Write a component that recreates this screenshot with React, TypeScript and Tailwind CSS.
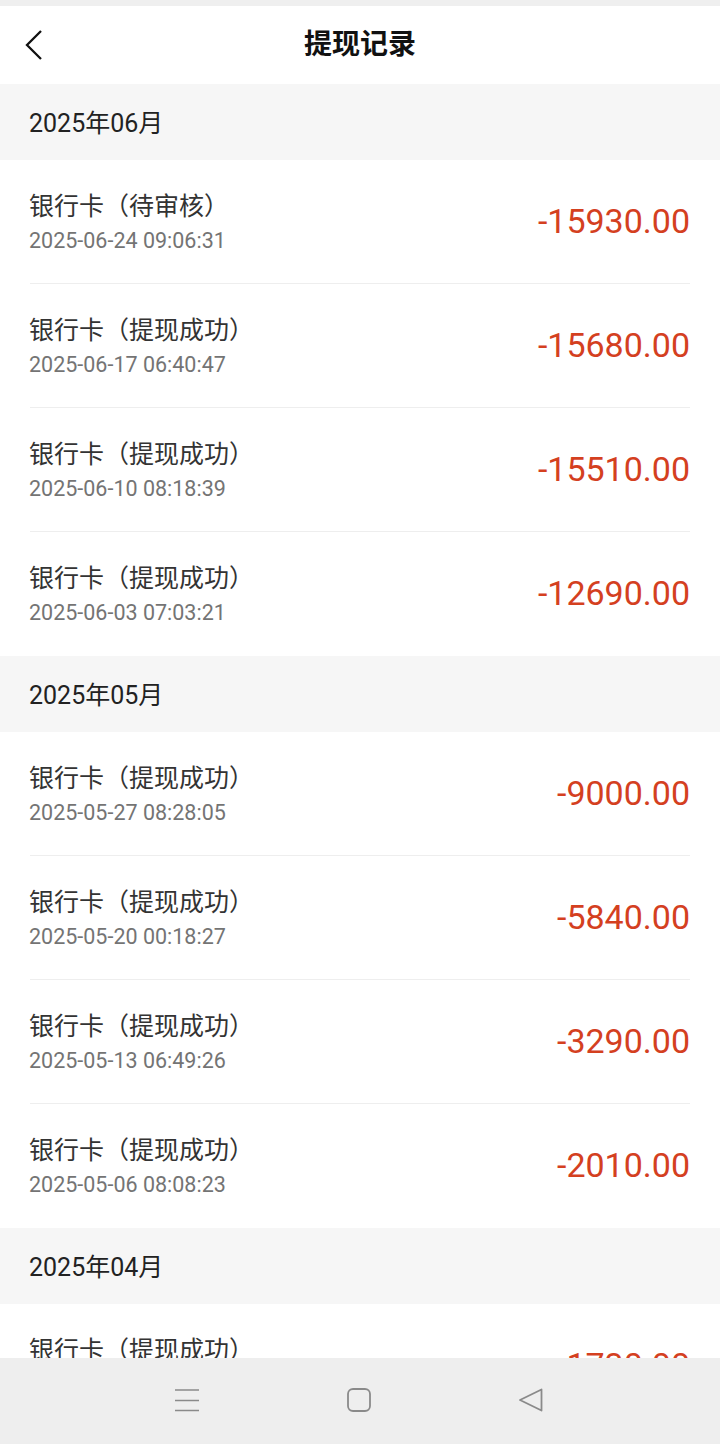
import React from 'react';

type Item = { status: string; time: string; amount: string };

const GROUPS: { month: string; items: Item[] }[] = [
  {
    month: '2025年06月',
    items: [
      { status: '待审核', time: '2025-06-24 09:06:31', amount: '-15930.00' },
      { status: '提现成功', time: '2025-06-17 06:40:47', amount: '-15680.00' },
      { status: '提现成功', time: '2025-06-10 08:18:39', amount: '-15510.00' },
      { status: '提现成功', time: '2025-06-03 07:03:21', amount: '-12690.00' },
    ],
  },
  {
    month: '2025年05月',
    items: [
      { status: '提现成功', time: '2025-05-27 08:28:05', amount: '-9000.00' },
      { status: '提现成功', time: '2025-05-20 00:18:27', amount: '-5840.00' },
      { status: '提现成功', time: '2025-05-13 06:49:26', amount: '-3290.00' },
      { status: '提现成功', time: '2025-05-06 08:08:23', amount: '-2010.00' },
    ],
  },
  {
    month: '2025年04月',
    items: [
      { status: '提现成功', time: '2025-04-29 07:12:44', amount: '-1730.00' },
      { status: '提现成功', time: '2025-04-22 09:35:10', amount: '-1200.00' },
    ],
  },
];

const FONT = "font-['Roboto','Noto_Sans_CJK_SC',sans-serif]";

function Row({ item, last }: { item: Item; last: boolean }) {
  return (
    <div className="bg-white px-[30px]">
      <div
        className={`h-[124px] flex items-center justify-between ${
          last ? '' : 'border-b border-[#eeeeee]'
        }`}
      >
        <div className="flex flex-col -ml-px pt-[4px]">
          <span className="text-[25px] leading-[34px] text-[#333333]">
            银行卡（{item.status}）
          </span>
          <span className="text-[21.5px] leading-[34px] text-[#747474]">{item.time}</span>
        </div>
        <span className="text-[34px] leading-none text-[#d4401f] -mt-[2px]">{item.amount}</span>
      </div>
    </div>
  );
}

export default function App() {
  return (
    <div className={`${FONT} w-[720px] h-[1444px] flex flex-col overflow-hidden bg-[#f6f6f6]`}>
      <div className="flex-1 overflow-hidden">
        {/* status strip */}
        <div className="h-[6px] bg-[#efefef]" />

        {/* Header */}
        <div className="h-[78px] bg-white flex items-center">
          <div className="w-[70px] pl-[24px] flex items-center">
            <svg width="22" height="32" viewBox="0 0 22 32" fill="none">
              <path d="M17 2 L3 16 L17 30" stroke="#111" strokeWidth="2.3" />
            </svg>
          </div>
          <h1 className="flex-1 text-center text-[28px] font-bold text-[#111111] -ml-[70px] pointer-events-none">
            提现记录
          </h1>
        </div>

        {GROUPS.map((g) => (
          <div key={g.month}>
            <div className="h-[76px] flex items-center pl-[29px] pt-[4px] text-[25px] text-[#222222] bg-[#f6f6f6]">
              {g.month}
            </div>
            {g.items.map((item, i) => (
              <Row key={item.time} item={item} last={i === g.items.length - 1} />
            ))}
          </div>
        ))}
      </div>

      {/* Android nav bar */}
      <div className="h-[86px] shrink-0 bg-[#eeeeee] flex items-center justify-center gap-[146px] pb-[2px] pr-[2px]">
        <svg width="26" height="24" viewBox="0 0 26 24" fill="none">
          <path d="M1 2 H25 M1 12.5 H25 M1 22.5 H25" stroke="#8a8a8a" strokeWidth="1.6" />
        </svg>
        <svg width="26" height="24" viewBox="0 0 26 24" fill="none">
          <rect x="2" y="1" width="22" height="22" rx="5" stroke="#8a8a8a" strokeWidth="1.8" />
        </svg>
        <svg width="26" height="24" viewBox="0 0 26 24" fill="none">
          <path
            d="M23.5 1.5 L2 12 L23.5 22.5 Z"
            stroke="#8a8a8a"
            strokeWidth="1.8"
            strokeLinejoin="round"
          />
        </svg>
      </div>
    </div>
  );
}
